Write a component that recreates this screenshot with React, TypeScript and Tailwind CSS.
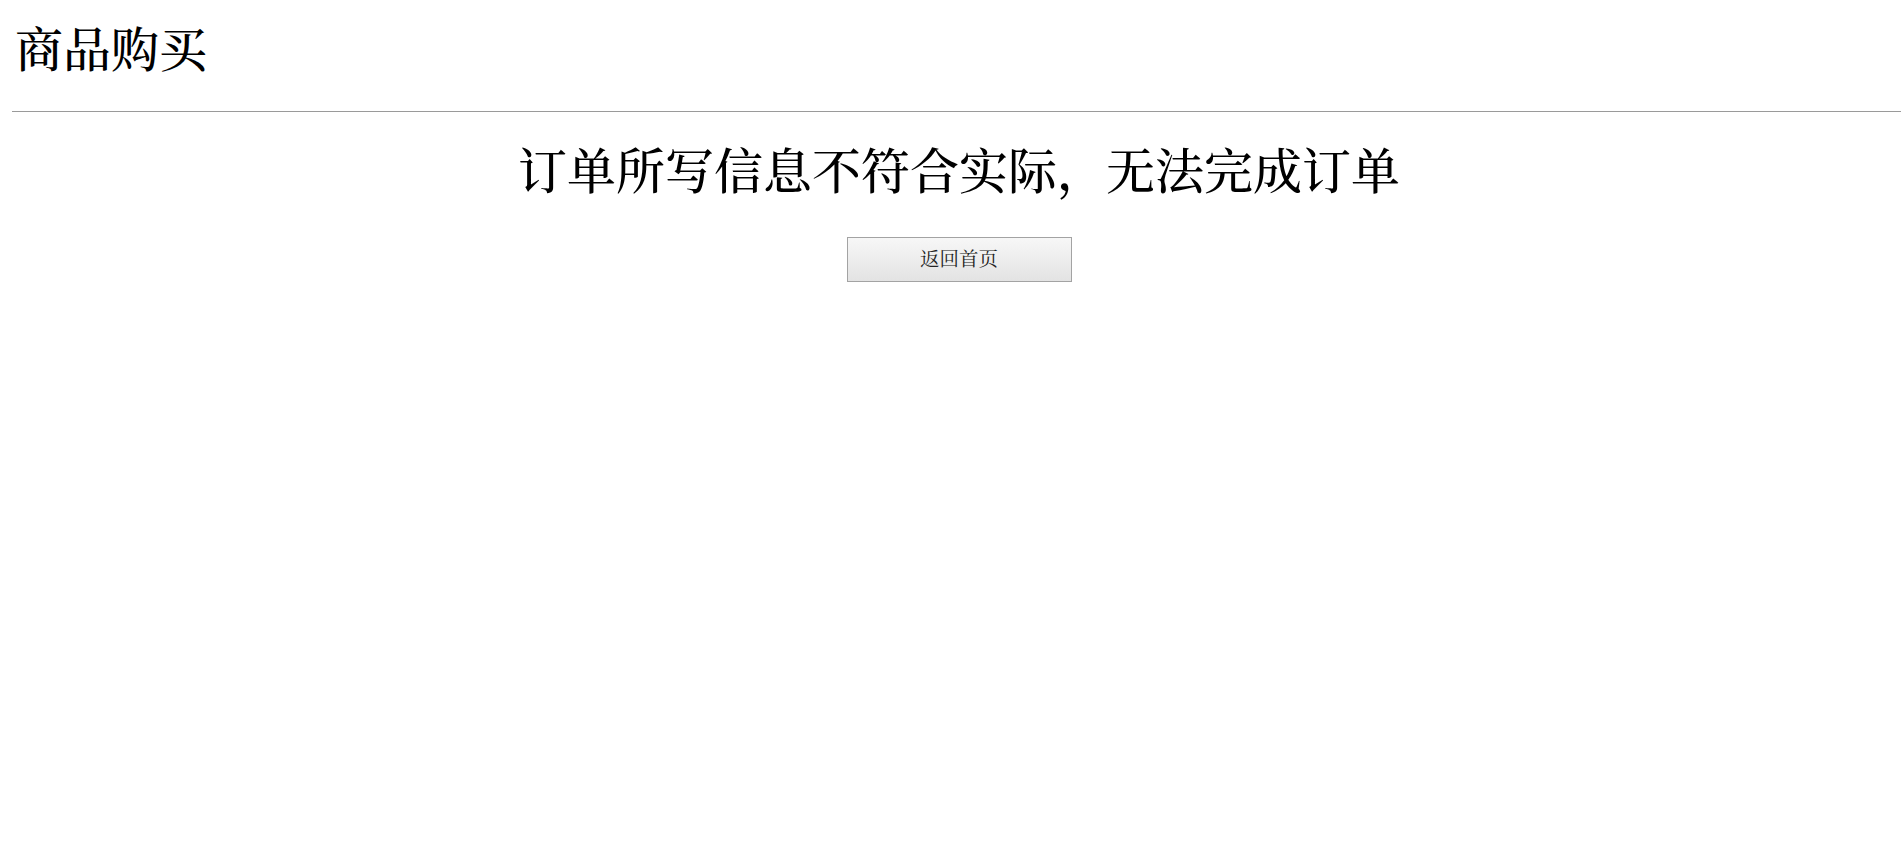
export default function App() {
  const font = {
    fontFamily:
      '"Liberation Serif", "Noto Serif CJK SC", "Noto Sans CJK SC", serif',
  };
  return (
    <div className="min-h-[851px] w-full bg-white text-black" style={font}>
      <div className="pl-[12px]">
        <h1 className="pt-[22px] pl-[3px] text-[48px] leading-[58px] font-medium">
          商品购买
        </h1>
        <div className="mt-[31px] h-[1px] bg-[#9a9a9a]" />
      </div>
      <div className="flex flex-col items-center pl-[17px]">
        <h2 className="mt-[32px] text-[49px] leading-[58px] font-medium">
          订单所写信息不符合实际，无法完成订单
        </h2>
        <button className="mt-[35px] flex h-[45px] w-[225px] items-center justify-center border border-[#a3a3a3] bg-gradient-to-b from-[#f7f7f7] to-[#e3e3e3] text-[19.5px] text-[#222]">
          返回首页
        </button>
      </div>
    </div>
  );
}
